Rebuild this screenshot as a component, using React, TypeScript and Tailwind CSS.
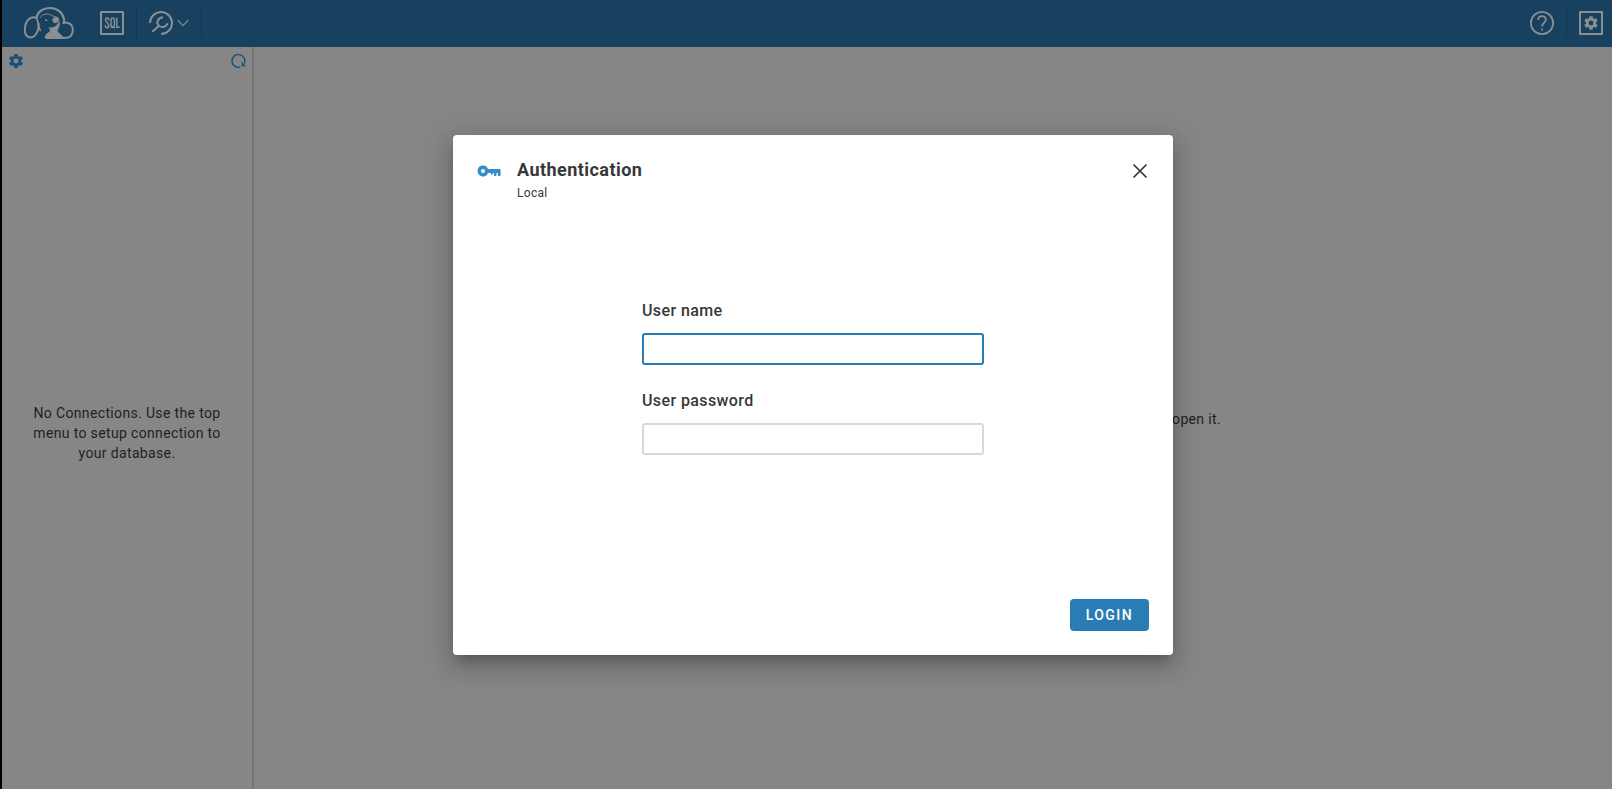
import React from "react";

const GEAR =
  "M19.14 12.94c.04-.3.06-.61.06-.94 0-.32-.02-.64-.07-.94l2.03-1.58a.49.49 0 0 0 .12-.61l-1.92-3.32a.488.488 0 0 0-.59-.22l-2.39.96c-.5-.38-1.03-.7-1.62-.94l-.36-2.54a.484.484 0 0 0-.48-.41h-3.84c-.24 0-.43.17-.47.41l-.36 2.54c-.59.24-1.13.57-1.62.94l-2.39-.96c-.22-.08-.47 0-.59.22L2.74 8.87c-.12.21-.08.47.12.61l2.03 1.58c-.05.3-.09.63-.09.94s.02.64.07.94l-2.03 1.58a.49.49 0 0 0-.12.61l1.92 3.32c.12.22.37.29.59.22l2.39-.96c.5.38 1.03.7 1.62.94l.36 2.54c.05.24.24.41.48.41h3.84c.24 0 .44-.17.47-.41l.36-2.54c.59-.24 1.13-.56 1.62-.94l2.39.96c.22.08.47 0 .59-.22l1.92-3.32c.12-.22.07-.47-.12-.61l-2.01-1.58zM12 15.4a3.4 3.4 0 1 1 0-6.8 3.4 3.4 0 0 1 0 6.8z";

function Logo() {
  return (
    <svg viewBox="0 0 150 96" className="h-8 w-[50px]" fill="none" stroke="currentColor" strokeWidth="6" strokeLinecap="round" strokeLinejoin="round" aria-hidden="true">
      <path d="M37 33C27 28 15 33 9 43C1 57 0 76 7 85C13 93 25 94 32 86C42 76 44 62 44 50" />
      <path d="M37 33C40 14 57 3 78 3C100 3 116 17 120 36C121 41 120 45 118 48C125 45 136 47 142 54C149 64 147 80 140 88C134 93 128 93 118 93H68" />
      <path d="M39 35C43 48 41 57 49 70" strokeWidth="5" />
      <path d="M48 32C56 20 72 18 82 25C90 29 97 28 102 33" strokeWidth="3" />
      <path d="M85 38C85 29 103 28 105 36C106 44 99 49 93 48C88 47 85 43 85 38Z" fill="currentColor" stroke="none" />
      <path d="M62 39C64 35 70 36 71 41C67 43 64 42 62 39Z" fill="currentColor" stroke="none" />
      <path d="M62 94C62 86 67 80 74 76C80 72 77 66 74 59C82 64 92 61 98 54C103 49 105 44 106 40C110 54 105 62 101 70C98 77 113 80 120 94Z" fill="currentColor" stroke="none" />
    </svg>
  );
}

function SqlIcon() {
  return (
    <span className="flex size-6 items-center justify-center rounded-[1px] border-2 border-current">
      <svg viewBox="0 0 16 12" className="h-3 w-4" fill="none" stroke="currentColor" strokeWidth="1.5" aria-hidden="true">
        <path d="M4.7 3.6V2.6C4.7.5 1.5.5 1.5 2.6C1.5 5.4 4.8 5.7 4.8 8.8C4.8 11.4 1.4 11.4 1.4 8.8V8" />
        <path d="M7 3.2C7 .4 10.4 .4 10.4 3.2V8.2C10.4 11 7 11 7 8.2ZM8.8 9L10.7 11.4" />
        <path d="M12.8.8V10.2H15.8" />
      </svg>
    </span>
  );
}

function DriverIcon() {
  return (
    <svg viewBox="0 0 72 72" className="size-6" fill="none" stroke="currentColor" strokeWidth="6" aria-hidden="true">
      <path d="M3 36A33 33 0 1 1 36 69" />
      <path d="M10 62L30 44M42 19C28 20 21 33 28 42C35 52 51 49 56 37" />
    </svg>
  );
}

function Divider() {
  return <span className="h-8 w-px bg-[#133650]" />;
}

function Toolbar() {
  return (
    <header className="flex h-[47px] shrink-0 items-center justify-between bg-[#17415f] pb-0.5 text-[#8b8f92]">
      <div className="flex items-center">
        <a href="#home" aria-label="Home" className="ml-[22px] mr-[26px]">
          <Logo />
        </a>
        <button aria-label="SQL editor" className="mr-3">
          <SqlIcon />
        </button>
        <Divider />
        <button aria-label="Driver manager" className="mx-3 flex items-center gap-1">
          <DriverIcon />
          <svg viewBox="0 0 12 8" className="h-2 w-3" fill="none" stroke="currentColor" strokeWidth="1.2" aria-hidden="true">
            <path d="M.8 1.2L6 6.6L11.2 1.2" />
          </svg>
        </button>
        <Divider />
      </div>
      <div className="flex items-center">
        <button aria-label="Help" className="mr-3">
          <svg viewBox="0 0 24 24" className="size-6" fill="none" stroke="currentColor" strokeWidth="1.8" aria-hidden="true">
            <circle cx="12" cy="12" r="11.1" />
            <path d="M8.2 9C8.2 3.9 15.9 4 15.9 8.6C15.9 11.6 12.1 11.7 12.1 15.6M12.1 17.4V19.4" />
          </svg>
        </button>
        <Divider />
        <button aria-label="Settings" className="ml-3 mr-[9px] flex size-6 items-center justify-center rounded-[1px] border-2 border-current">
          <svg viewBox="2 2 20 20" className="size-3.5" fill="currentColor" aria-hidden="true">
            <path d={GEAR} />
          </svg>
        </button>
      </div>
    </header>
  );
}

function Navigation() {
  return (
    <aside className="flex w-[252px] shrink-0 flex-col border-r-2 border-[#747474]">
      <div className="flex h-7 items-center justify-between px-1.5 text-[#1b5178]">
        <button aria-label="Navigation settings">
          <svg viewBox="1 1 22 22" className="size-4" fill="currentColor" aria-hidden="true">
            <path d={GEAR} />
          </svg>
        </button>
        <button aria-label="Refresh">
          <svg viewBox="0 0 16 16" className="size-4" fill="none" stroke="currentColor" strokeWidth="1.5" aria-hidden="true">
            <path d="M10.4 14A6.4 6.4 0 1 1 14.2 10.6" />
            <path d="M11.6 8.8V13.2H16Z" fill="currentColor" stroke="none" />
          </svg>
        </button>
      </div>
      <div className="flex flex-1 items-center justify-center px-6 pt-0.5">
        <p className="text-center text-sm leading-5 tracking-wide">
          No Connections. Use the top menu to setup connection to your database.
        </p>
      </div>
    </aside>
  );
}

function Field({ id, label, type, focused = false }: { id: string; label: string; type: string; focused?: boolean }) {
  return (
    <div className="flex flex-col gap-3">
      <label htmlFor={id} className="text-base leading-5 font-medium tracking-wide">
        {label}
      </label>
      <input
        id={id}
        type={type}
        className={
          focused
            ? "h-8 w-full rounded-[3px] border-2 border-[#2a7cb4] px-3 text-sm outline-none"
            : "h-8 w-full rounded-[3px] border-2 border-[#d8d8d8] px-3 text-sm outline-none"
        }
      />
    </div>
  );
}

function LoginDialog() {
  return (
    <form
      role="dialog"
      aria-modal="true"
      aria-labelledby="dialog-title"
      className="flex min-h-[520px] w-full max-w-[720px] flex-col rounded bg-white p-6 text-[#373737] shadow-[0_8px_10px_-5px_rgba(0,0,0,0.2),0_10px_20px_2px_rgba(0,0,0,0.14),0_6px_30px_5px_rgba(0,0,0,0.12)]"
    >
      <div className="flex items-start">
        <svg viewBox="0 0 24 12" className="mt-1.5 h-3 w-6 text-[#338ecc]" fill="currentColor" fillRule="evenodd" aria-hidden="true">
          <path d="M6 .6A5.4 5.4 0 0 1 11 4H22.4Q23.6 4 23.6 5V10.2Q23.6 11 22.8 11H21.7Q20.9 11 20.9 10.2V8H19.5V10.2Q19.5 11 18.7 11H17.7Q16.9 11 16.9 10.2V8H16V8.8Q16 9.6 15.3 9.6H14.5Q13.8 9.6 13.8 8.8V8H11A5.4 5.4 0 1 1 6 .6ZM6 4A2 2 0 1 0 6 8A2 2 0 1 0 6 4Z" />
        </svg>
        <div className="ml-4 flex-1">
          <h1 id="dialog-title" className="text-lg leading-[22px] font-bold tracking-wide">
            Authentication
          </h1>
          <p className="mt-1 text-xs leading-4 tracking-wide">Local</p>
        </div>
        <button type="button" aria-label="Close" className="-mr-[3px] p-1">
          <svg viewBox="0 0 16 16" className="size-4" fill="none" stroke="currentColor" strokeWidth="1.7" aria-hidden="true">
            <path d="M1.5 1.5L14.5 14.5M14.5 1.5L1.5 14.5" />
          </svg>
        </button>
      </div>
      <div className="mx-auto flex w-full max-w-[342px] flex-1 flex-col justify-center gap-[26px] pb-11">
        <Field id="user-name" label="User name" type="text" focused />
        <Field id="user-password" label="User password" type="password" />
      </div>
      <div className="flex justify-end">
        <button type="submit" className="h-8 rounded bg-[#2a7cb4] px-4 text-sm font-medium tracking-widest text-white uppercase">
          Login
        </button>
      </div>
    </form>
  );
}

export default function App() {
  return (
    <div className="relative flex min-h-screen flex-col overflow-hidden border-l-2 border-black bg-[#868686] font-[Roboto,sans-serif] text-[#1f1f1f]">
      <Toolbar />
      <div className="flex flex-1">
        <Navigation />
        <main className="flex flex-1 items-center justify-end pt-0.5 pr-[391px]">
          <p className="text-sm leading-5 tracking-wide">open it.</p>
        </main>
      </div>
      <div className="absolute inset-0 flex items-center justify-center pl-3">
        <LoginDialog />
      </div>
    </div>
  );
}
